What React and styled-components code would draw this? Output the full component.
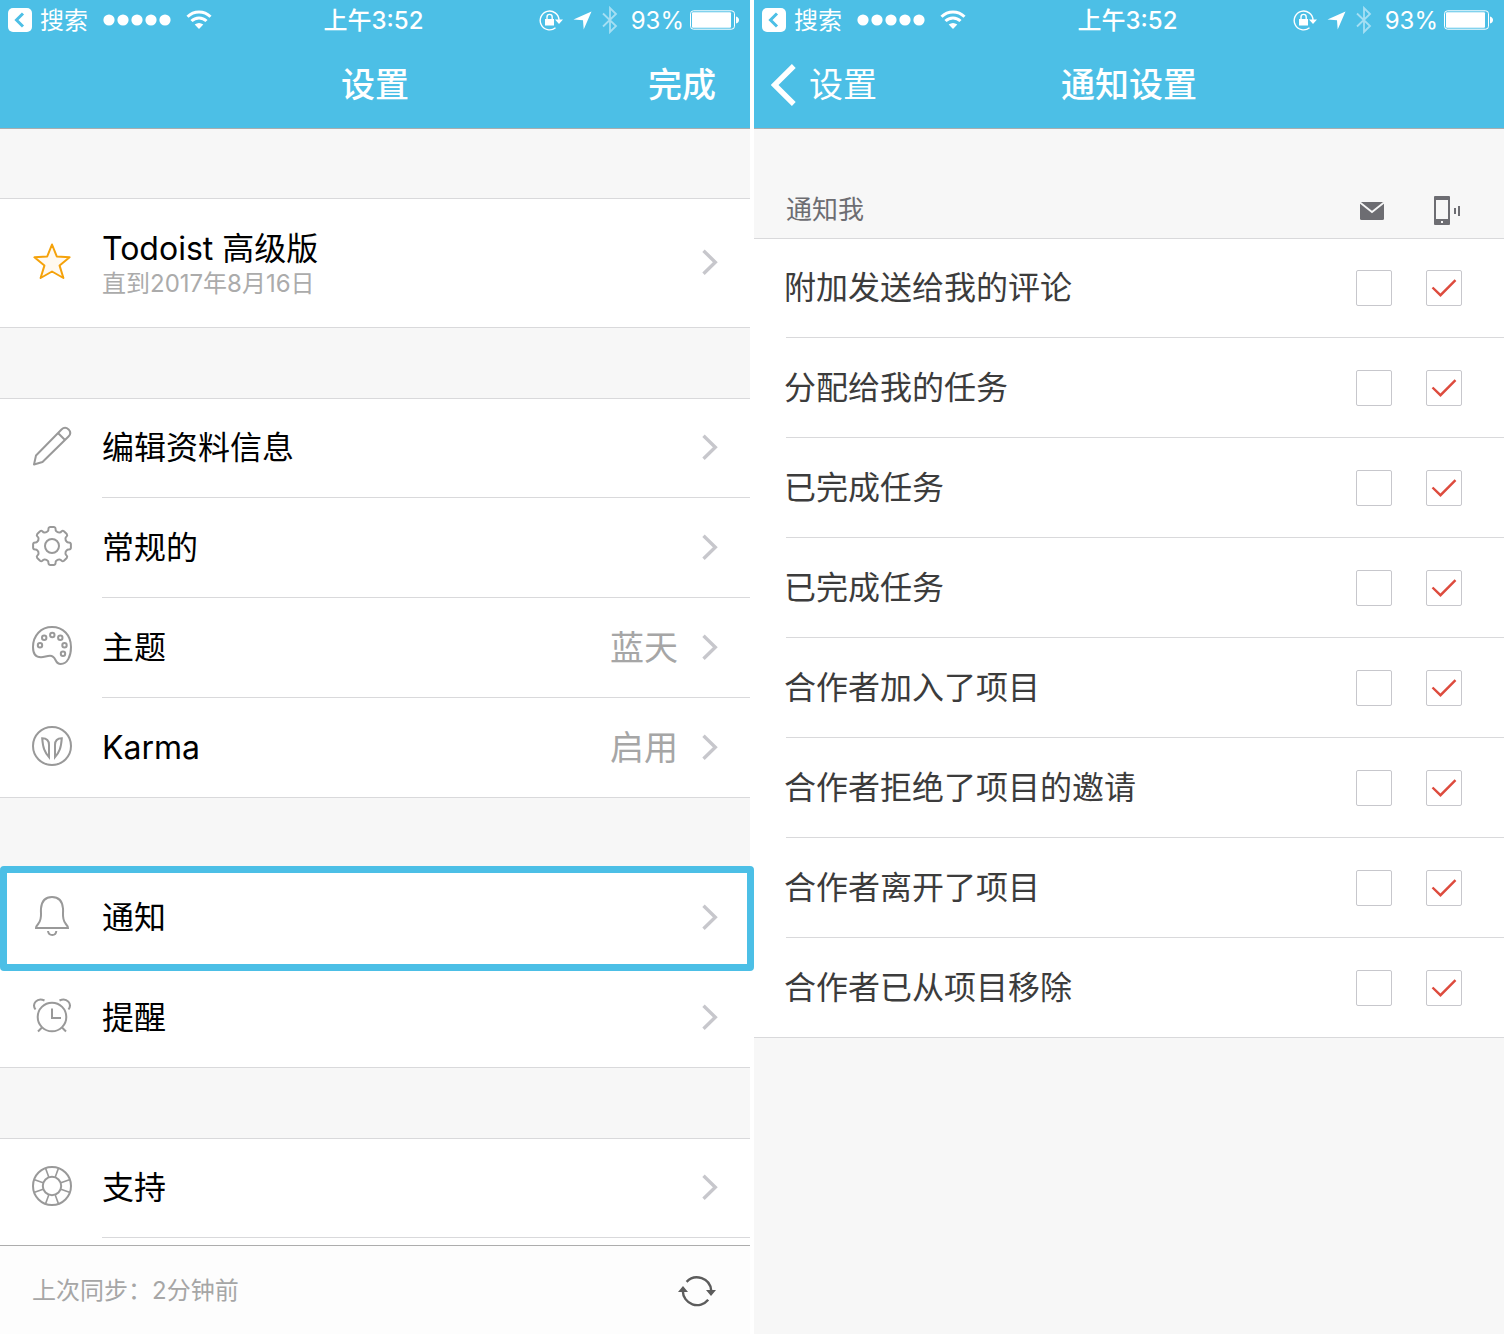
import React, { useState } from "react";
import styled, { createGlobalStyle, css } from "styled-components";

const blue = "#4cbfe6";
const line = "#d9d9db";
const iconGray = "#999999";

const GlobalStyle = createGlobalStyle`
  *, *::before, *::after { box-sizing: border-box; }
  body {
    margin: 0;
    background: #ffffff;
    font-family: Inter, "Noto Sans CJK SC", sans-serif;
  }
  button { font: inherit; color: inherit; background: none; border: 0; padding: 0; margin: 0; cursor: pointer; text-align: left; }
  svg { display: block; flex: none; }
`;

const Page = styled.div`
  display: grid;
  grid-template-columns: minmax(0, 1fr) minmax(0, 1fr);
  gap: 4px;
  min-height: 100vh;
`;

const Screen = styled.main`
  display: flex;
  flex-direction: column;
  background: #f7f7f7;
`;

const Header = styled.header`
  height: 128px;
  color: #ffffff;
  background: ${blue};
  box-shadow: 0 1px 0 #a9adaf;
`;

const StatusBar = styled.div`
  display: grid;
  grid-template-columns: 1fr auto 1fr;
  align-items: center;
  height: 40px;
  padding: 0 11px 0 8px;
  font-size: 24px;
  line-height: 38px;
`;

const StatusGroup = styled.div`
  display: flex;
  align-items: center;
  gap: ${(p) => p.$gap}px;
  justify-content: ${(p) => (p.$end ? "flex-end" : "flex-start")};
`;

const BackToApp = styled.button`
  display: flex;
  align-items: center;
  gap: 8px;
`;

const StatusText = styled.span`
  padding-top: 2px;
  font-weight: ${(p) => (p.$strong ? 500 : 400)};
`;

const NavBar = styled.nav`
  display: grid;
  grid-template-columns: 1fr auto 1fr;
  align-items: center;
  height: 88px;
  padding: 2px 17px 0;
  font-size: 34px;
  line-height: 48px;
`;

const NavTitle = styled.h1`
  grid-column: 2;
  margin: 0;
  font-size: inherit;
  font-weight: 500;
`;

const NavBack = styled.button`
  display: flex;
  align-items: center;
  gap: 12px;
  justify-self: start;
  grid-row: 1;
`;

const NavDone = styled.button`
  justify-self: end;
  padding-right: 17px;
  font-weight: 500;
`;

const Section = styled.section`
  margin-top: 70px;
  background: #ffffff;
  box-shadow: inset 0 1px 0 ${line}, inset 0 -1px 0 ${(p) => (p.$open ? "transparent" : line)};
  ${(p) => p.$open && css`flex: 1; padding-bottom: 7px;`}
`;

const Row = styled.button`
  position: relative;
  display: flex;
  width: 100%;
  height: ${(p) => (p.$tall ? 130 : 100)}px;
  padding-left: 32px;
  gap: 30px;

  ${(p) => p.$highlighted && css`
    z-index: 1;
    &::after {
      content: "";
      position: absolute;
      inset: -2px -4px -3px 0;
      border: 7px solid ${blue};
      border-radius: 4px;
    }
  `}
`;

const RowIcon = styled.span`
  display: flex;
  align-items: center;
  height: 100%;
  padding-bottom: 4px;
`;

const RowBody = styled.span`
  display: flex;
  flex: 1;
  align-items: center;
  gap: 24px;
  height: 100%;
  padding-right: 32px;
  border-bottom: 1px solid ${(p) => (p.$divider ? line : "transparent")};
`;

const RowText = styled.span`
  display: flex;
  flex: 1;
  flex-direction: column;
  padding-top: ${(p) => (p.$stacked ? 4 : 0)}px;
`;

const RowTitle = styled.span`
  font-size: 32px;
  line-height: 38px;
  color: #000000;
`;

const RowNote = styled.span`
  font-size: 24px;
  line-height: 32px;
  color: #ababab;
`;

const RowValue = styled.span`
  font-size: 34px;
  line-height: 48px;
  color: #a6a6a6;
`;

const SyncBar = styled.footer`
  display: flex;
  align-items: center;
  justify-content: space-between;
  height: 89px;
  padding: 2px 34px 0 32px;
  font-size: 24px;
  line-height: 32px;
  color: #a6a6a6;
  background: #fdfdfd;
  border-top: 1px solid #adadad;
`;

const Table = styled.table`
  width: 100%;
  table-layout: fixed;
  border-collapse: separate;
  border-spacing: 0;
`;

const TableHead = styled.th`
  width: ${(p) => p.$width || "auto"};
  height: 110px;
  padding: 0 0 11px ${(p) => (p.$width ? 17 : 32)}px;
  vertical-align: bottom;
  text-align: left;
  font-size: 26px;
  font-weight: 400;
  line-height: 34px;
  color: #6d6d72;
`;

const TableBody = styled.tbody`
  background: #ffffff;
  box-shadow: inset 0 1px 0 ${line}, inset 0 -1px 0 ${line};
`;

const NameCell = styled.th`
  height: 100px;
  padding: 0 0 1px 30px;
  text-align: left;
  font-size: 32px;
  font-weight: 400;
  line-height: 40px;
  color: #3c3c3c;
  background: linear-gradient(${line}, ${line}) 32px 100% / 100% 1px no-repeat;
`;

const CheckCell = styled.td`
  height: 100px;
  padding: 0 0 1px 17px;
  background: linear-gradient(${line}, ${line}) 0 100% / 100% 1px no-repeat;
`;

const CheckBox = styled.label`
  position: relative;
  display: block;
  width: 36px;
  height: 36px;

  input {
    display: block;
    appearance: none;
    width: 36px;
    height: 36px;
    margin: 0;
    background: #ffffff;
    border: 1px solid #c7c7cc;
    border-radius: 2px;
  }
  svg {
    position: absolute;
    inset: 0;
    visibility: hidden;
    pointer-events: none;
  }
  input:checked + svg { visibility: visible; }
`;

const Line = ({ size = 40, color = iconGray, width = 2, children }) => (
  <svg width={size} height={size} viewBox="0 0 40 40" fill="none" stroke={color} strokeWidth={width} aria-hidden="true">
    {children}
  </svg>
);

const StarIcon = () => (
  <Line color="#f5a20a">
    <path
      d="M20 3.5 L24.8 15.5 L37.6 16.3 L27.6 24.6 L31.4 37 L20 30.5 L8.6 37 L12.4 24.6 L2.4 16.3 L15.2 15.5 Z"
      fill="#fff9f0"
      strokeLinejoin="round"
    />
  </Line>
);

const PencilIcon = () => (
  <Line>
    <path d="M2 38.5 L4 29.5 L29.5 3.5 Q33 0 36.6 3.4 Q40 7 36.5 10.5 L10.5 36 Z M26 7 L33 14" strokeLinejoin="round" />
  </Line>
);

const gearPath = (() => {
  const parts = [];
  for (let i = 0; i < 8; i += 1) {
    const at = (r, deg) => {
      const a = ((i * 45 + deg - 90) * Math.PI) / 180;
      return `${(20 + r * Math.cos(a)).toFixed(2)} ${(20 + r * Math.sin(a)).toFixed(2)}`;
    };
    parts.push(`${i ? "L" : "M"}${at(15.4, -16)} Q${at(16, -12)} ${at(17.4, -12)} Q${at(19, -11)} ${at(19, -6)} L${at(19, 6)} Q${at(19, 11)} ${at(17.4, 12)} Q${at(16, 12)} ${at(15.4, 16)} Q${at(14.4, 22.5)} ${at(15.4, 29)}`);
  }
  return `${parts.join(" ")} Z`;
})();

const GearIcon = () => (
  <Line>
    <path d={gearPath} strokeLinejoin="round" />
    <circle cx="20" cy="20" r="7" />
  </Line>
);

const PaletteIcon = () => (
  <Line>
    <path d="M20 1 C9 1 1 9.500 1 21 C1 28 4 31.300 9 31.300 C12.500 31.300 14.500 29.800 18 29.800 C25 29.800 22 38 28.700 38 C35.500 38 39 30 39 21 C39 9 31 1 20 1 Z" />
    {[[8, 19.3], [12.2, 11.7], [20.3, 9], [28.3, 11.7], [32.5, 19.3], [31, 27.7]].map(([x, y]) => (
      <circle key={`${x}-${y}`} cx={x} cy={y} r="2.200" />
    ))}
  </Line>
);

const KarmaIcon = () => (
  <Line>
    <circle cx="20" cy="20" r="19" />
    <path d="M10.200 12.300 C13.500 12.300 17 13 17 19 V31.200 C12.500 26 11 22 10.200 12.300 Z M29.800 12.300 C26.500 12.300 23 13 23 19 V31.200 C27.500 26 29 22 29.800 12.300 Z" />
  </Line>
);

const BellIcon = () => (
  <Line>
    <path d="M4 32 L36 32 Q36 30.500 33.500 27.500 C29.500 22 31.500 18 31 12.500 Q30 1 20 1 Q10 1 9 12.500 C8.500 18 10.500 22 6.500 27.500 Q4 30.500 4 32 Z M16 35 Q16.500 39 20.300 39 Q24 39 24.300 35" />
  </Line>
);

const AlarmIcon = () => (
  <Line>
    <circle cx="20" cy="21" r="14.3" />
    <path d="M20 12.500 V22 H29 M10 31.500 L6 35.500 M30 31.500 L34 35.500 M3.500 13.500 C-0.500 8 5 1 12.500 4.500 M36.500 13.500 C40.500 8 35 1 27.500 4.500" />
  </Line>
);

const BuoyIcon = () => (
  <Line>
    <circle cx="20" cy="20" r="19" />
    <circle cx="20" cy="20" r="9.2" />
    {[20, 70, 110, 160, 200, 250, 290, 340].map((deg) => (
      <path key={deg} d="M29.500 20 H38.500" strokeWidth="1.6" transform={`rotate(${deg} 20 20)`} />
    ))}
  </Line>
);

const SyncIcon = () => (
  <svg width="38" height="32" viewBox="0 0 38 32" fill="none" stroke="#5c5c5c" strokeWidth="2.400" role="img" aria-label="同步">
    <path d="M8.600 6.800 A14.300 14.300 0 0 1 33.200 15.500 M30.200 24.800 A14.300 14.300 0 0 1 4.800 16" />
    <path d="M28 15 H38 L33 21 Z M0 17 H10 L5 11 Z" fill="#5c5c5c" stroke="none" />
  </svg>
);

const Chevron = () => (
  <svg width="16" height="27" viewBox="0 0 16 27" fill="none" stroke="#c7c7cc" strokeWidth="3.400" aria-hidden="true">
    <path d="M1.500 1.700 L13.300 13.200 L1.500 24.700" />
  </svg>
);

const BackChevron = () => (
  <svg width="26" height="42" viewBox="0 0 26 42" fill="none" stroke="#ffffff" strokeWidth="5.400" aria-hidden="true">
    <path d="M22.800 2 L3.600 21 L22.800 40" />
  </svg>
);

const AppBackIcon = () => (
  <svg width="24" height="24" viewBox="0 0 24 24" aria-hidden="true">
    <rect width="24" height="24" rx="5" fill="#ffffff" />
    <path d="M15 5.500 L8.500 12 L15 18.500" fill="none" stroke={blue} strokeWidth="3" />
  </svg>
);

const SignalIcon = () => (
  <svg width="68" height="12" viewBox="0 0 68 12" fill="#ffffff" aria-hidden="true">
    {[6, 20, 34, 48, 62].map((x) => <circle key={x} cx={x} cy="6" r="5.600" />)}
  </svg>
);

const WifiIcon = () => (
  <svg width="26" height="20" viewBox="0 0 26 20" fill="none" stroke="#ffffff" strokeWidth="3" aria-hidden="true">
    <path d="M1.500 6.800 A16.300 16.300 0 0 1 24.500 6.800 M5.500 11 A10.600 10.600 0 0 1 20.500 11" />
    <path d="M13 19 L8.700 14.600 Q13 11.200 17.300 14.600 Z" fill="#ffffff" stroke="none" />
  </svg>
);

const RotationLockIcon = () => (
  <svg width="24" height="22" viewBox="0 0 24 22" fill="none" stroke="#ffffff" aria-hidden="true">
    <path d="M16.500 18.800 A9.400 9.400 0 1 1 20 11" strokeWidth="1.400" />
    <path d="M16 10.500 H24 L20 15 Z M6 10 H15 V16.500 H6 Z" fill="#ffffff" stroke="none" />
    <path d="M8 10.500 V8 A2.600 2.600 0 0 1 13.200 8 V10.500" strokeWidth="1.400" />
  </svg>
);

const LocationIcon = () => (
  <svg width="19" height="19" viewBox="0 0 19 19" fill="#ffffff" aria-hidden="true">
    <path d="M18.500 0.500 L10.700 18.500 L10 9.200 L0.500 8.600 Z" />
  </svg>
);

const BluetoothIcon = () => (
  <svg width="16" height="28" viewBox="0 0 16 28" fill="none" stroke="#a5dff3" strokeWidth="1.800" aria-hidden="true">
    <path d="M1 7.500 L14 20 L8 26 V2 L14 8 L1 20.500" />
  </svg>
);

const BatteryIcon = () => (
  <svg width="49" height="20" viewBox="0 0 49 20" aria-hidden="true">
    <rect x="0.500" y="0.800" width="44" height="18.400" rx="3" fill="none" stroke="#ffffff" />
    <rect x="2" y="2.300" width="39" height="15.400" rx="1" fill="#ffffff" />
    <path d="M46 6.500 Q49 7.500 49 10 Q49 12.500 46 13.500 Z" fill="#ffffff" />
  </svg>
);

const MailIcon = () => (
  <svg width="36" height="32" viewBox="0 0 36 32" role="img" aria-label="电子邮件">
    <rect x="4" y="7" width="24" height="18" rx="1.500" fill="#6d6d72" />
    <path d="M4 7.500 L16 17 L28 7.500" fill="none" stroke="#f7f7f7" strokeWidth="1.800" />
  </svg>
);

const PhoneIcon = () => (
  <svg width="36" height="32" viewBox="0 0 36 32" fill="#6d6d72" role="img" aria-label="手机推送">
    <path fillRule="evenodd" d="M9 1 H23 Q24 1 24 2 V29 Q24 30 23 30 H9 Q8 30 8 29 V2 Q8 1 9 1 Z M10 5 V24 H22 V5 Z M15 26 V28 H17 V26 Z" />
    <path d="M28 13 H30 V19 H28 Z M32 11 H34 V21 H32 Z" />
  </svg>
);

const Status = () => (
  <StatusBar>
    <StatusGroup $gap={15}>
      <BackToApp type="button"><AppBackIcon /><StatusText>搜索</StatusText></BackToApp>
      <SignalIcon />
      <WifiIcon />
    </StatusGroup>
    <StatusText as="time" $strong>上午3:52</StatusText>
    <StatusGroup $gap={6} $end>
      <StatusGroup $gap={10}>
        <RotationLockIcon />
        <LocationIcon />
        <BluetoothIcon />
      </StatusGroup>
      <StatusGroup $gap={6}>
        <StatusText>&nbsp;93%</StatusText>
        <BatteryIcon />
      </StatusGroup>
    </StatusGroup>
  </StatusBar>
);

const SettingRow = ({ icon, title, note, value, divider, highlighted }) => (
  <Row type="button" $tall={Boolean(note)} $highlighted={highlighted}>
    <RowIcon>{icon}</RowIcon>
    <RowBody $divider={divider}>
      <RowText $stacked={Boolean(note)}>
        <RowTitle>{title}</RowTitle>
        {note && <RowNote>{note}</RowNote>}
      </RowText>
      {value && <RowValue>{value}</RowValue>}
      <Chevron />
    </RowBody>
  </Row>
);

const notifications = [
  "附加发送给我的评论",
  "分配给我的任务",
  "已完成任务",
  "已完成任务",
  "合作者加入了项目",
  "合作者拒绝了项目的邀请",
  "合作者离开了项目",
  "合作者已从项目移除",
];

const Check = ({ label, initial }) => {
  const [checked, setChecked] = useState(initial);
  return (
    <CheckBox>
      <input type="checkbox" aria-label={label} checked={checked} onChange={(e) => setChecked(e.target.checked)} />
      <svg width="36" height="36" viewBox="0 0 36 36" fill="none" stroke="#dd4b3e" strokeWidth="2.400" aria-hidden="true">
        <path d="M6.500 17.500 L14.500 25.200 L29.500 10.200" />
      </svg>
    </CheckBox>
  );
};

export default function App() {
  return (
    <>
      <GlobalStyle />
      <Page>
        <Screen>
          <Header>
            <Status />
            <NavBar>
              <NavTitle>设置</NavTitle>
              <NavDone type="button">完成</NavDone>
            </NavBar>
          </Header>
          <Section>
            <SettingRow icon={<StarIcon />} title="Todoist 高级版" note="直到2017年8月16日" />
          </Section>
          <Section>
            <SettingRow icon={<PencilIcon />} title="编辑资料信息" divider />
            <SettingRow icon={<GearIcon />} title="常规的" divider />
            <SettingRow icon={<PaletteIcon />} title="主题" value="蓝天" divider />
            <SettingRow icon={<KarmaIcon />} title="Karma" value="启用" />
          </Section>
          <Section>
            <SettingRow icon={<BellIcon />} title="通知" divider highlighted />
            <SettingRow icon={<AlarmIcon />} title="提醒" />
          </Section>
          <Section $open>
            <SettingRow icon={<BuoyIcon />} title="支持" divider />
          </Section>
          <SyncBar>
            <span>上次同步：2分钟前</span>
            <button type="button"><SyncIcon /></button>
          </SyncBar>
        </Screen>
        <Screen>
          <Header>
            <Status />
            <NavBar>
              <NavBack type="button"><BackChevron />设置</NavBack>
              <NavTitle>通知设置</NavTitle>
            </NavBar>
          </Header>
          <Table>
            <thead>
              <tr>
                <TableHead scope="col">通知我</TableHead>
                <TableHead scope="col" $width="70px"><MailIcon /></TableHead>
                <TableHead scope="col" $width="95px"><PhoneIcon /></TableHead>
              </tr>
            </thead>
            <TableBody>
              {notifications.map((name, i) => (
                <tr key={i}>
                  <NameCell scope="row">{name}</NameCell>
                  <CheckCell><Check label={`${name} 电子邮件`} initial={false} /></CheckCell>
                  <CheckCell><Check label={`${name} 手机推送`} initial /></CheckCell>
                </tr>
              ))}
            </TableBody>
          </Table>
        </Screen>
      </Page>
    </>
  );
}
